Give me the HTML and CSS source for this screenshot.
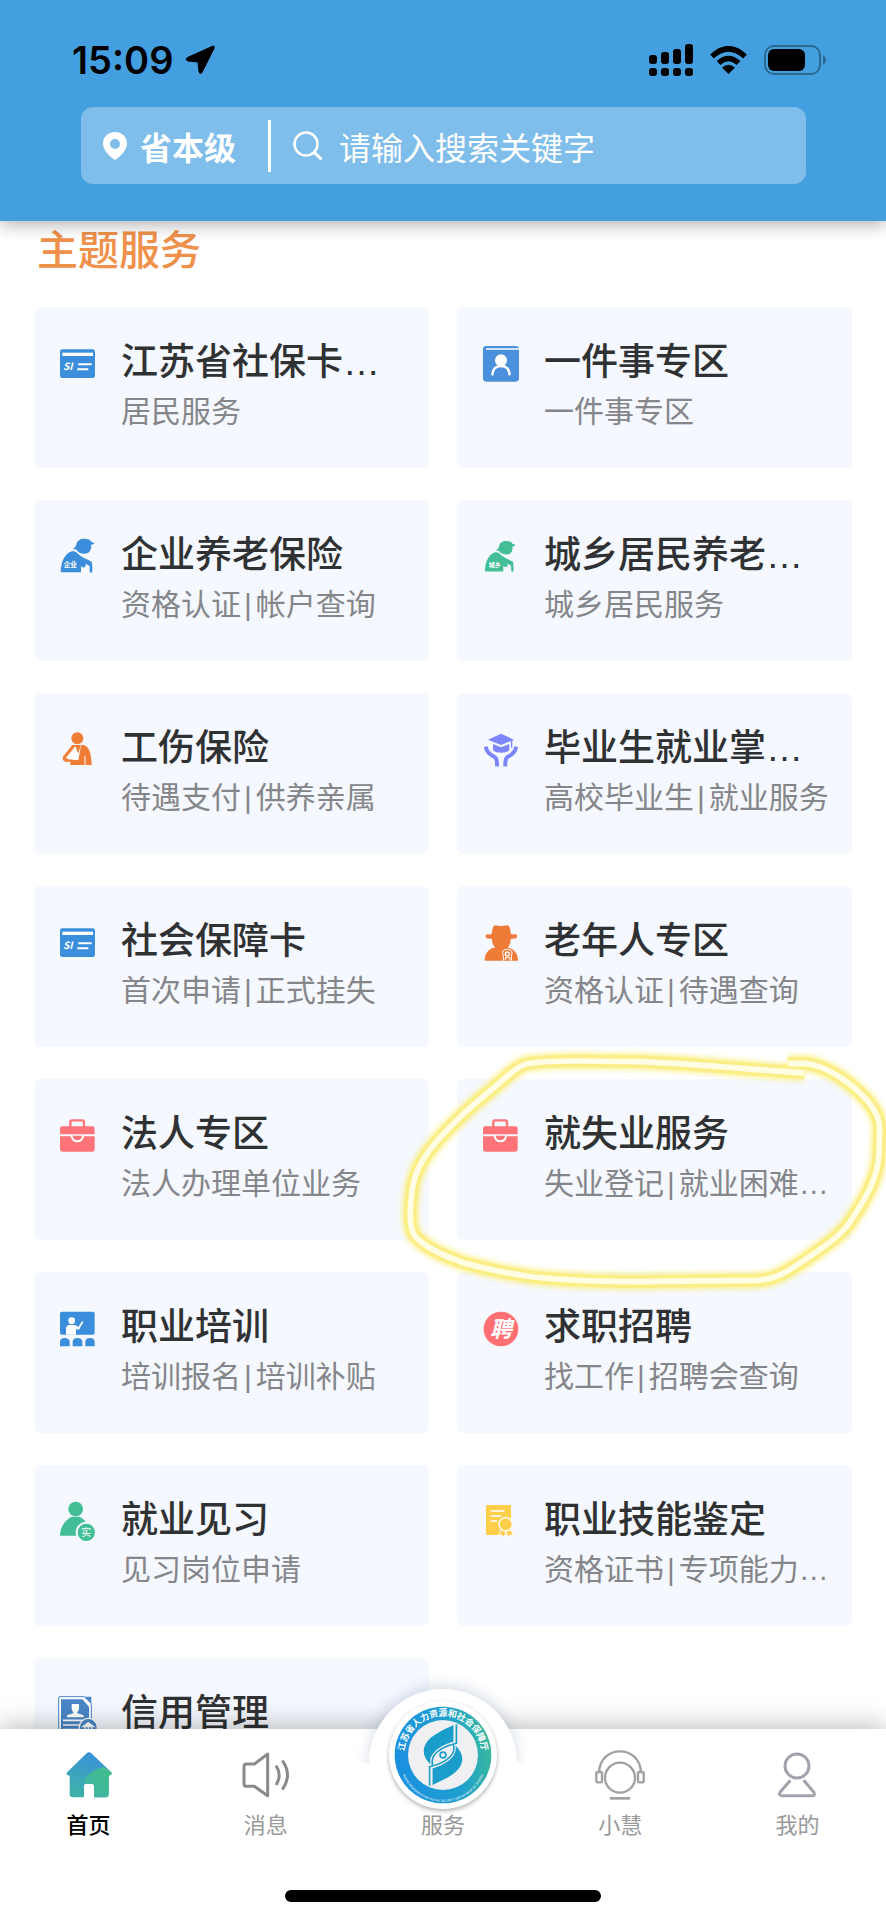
FILE: index.html
```html
<!DOCTYPE html>
<html lang="zh-CN">
<head>
    <meta charset="UTF-8">
    <meta name="viewport" content="width=device-width, initial-scale=1.0">
    <title>主题服务</title>
    <link rel="stylesheet" href="styles.css">
</head>
<body>

    <!-- Shared icons -->
    <svg class="sprite" aria-hidden="true">
        <symbol id="icon-case" viewBox="0 0 108 108">
            <rect x="34" y="10" width="41" height="28" rx="5" fill="none" stroke="#ff7478" stroke-width="7"/>
            <path d="M10 28H100Q107 28 107 35V52H3V35Q3 28 10 28ZM3 58H107V97Q107 104 100 104H10Q3 104 3 97Z" fill="#ff7478"/>
            <path d="M38 56a17 17 0 0 0 34 0" fill="#ff7478" stroke="#fff" stroke-width="6"/>
        </symbol>
        <symbol id="icon-elder" viewBox="0 0 108 108">
            <path d="M52 20C54 6 68 1 80 3C88 2 95 6 96 11L105 14L104 19L96 20C99 34 91 47 77 47C65 47 56 42 52 35C49 33 45 35 41 34C45 31 50 27 52 20Z"/>
            <path d="M5 103C6 75 14 50 35 41C43 38 51 40 57 47C68 59 84 62 98 71C100 78 100 91 100 100Q100 104 96 104Q92 104 92 99V84L80 77V84C76 90 72 90 66 84V103Z"/>
        </symbol>
    </svg>

    <div class="app">
        <header class="header">
            <div class="status-bar">
                <div class="status-left">
                    <span class="time">15:09</span>
                    <svg class="location-arrow" viewBox="0 0 30 30">
                        <path d="M27 1.500Q30 0 29 3.500L17 27.500Q14.500 30 14 26.500L13 17L3 16Q-0.500 14.500 2.500 12.500Z" stroke="#000" stroke-linejoin="round"/>
                    </svg>
                </div>
                <div class="status-right">
                    <svg class="signal" viewBox="0 0 44 32">
                        <rect x="0" y="11" width="8" height="9" rx="3"/>
                        <rect x="12" y="8" width="8" height="12" rx="3"/>
                        <rect x="24" y="5" width="8" height="15" rx="3"/>
                        <rect x="36" y="0" width="8" height="20" rx="3"/>
                        <rect x="0" y="24" width="8" height="8" rx="3"/>
                        <rect x="12" y="24" width="8" height="8" rx="3"/>
                        <rect x="24" y="24" width="8" height="8" rx="3"/>
                        <rect x="36" y="24" width="8" height="8" rx="3"/>
                    </svg>
                    <svg class="wifi" viewBox="0 0 38 28">
                        <path d="M2.500 10.500Q19 -5 35.500 10.500M9 17Q19 8 29 17" fill="none" stroke="#000" stroke-width="5.500"/>
                        <path d="M19 28L12.500 21.500Q19 16 25.500 21.500Z"/>
                    </svg>
                    <svg class="battery" viewBox="0 0 62 30">
                        <rect x="1" y="1" width="55" height="28" rx="9" fill="none" stroke="#2a688f" stroke-width="2"/>
                        <rect x="4" y="4" width="37" height="22" rx="6"/>
                        <path d="M59 10Q62 12 62 15Q62 18 59 20Z" fill="#2a688f"/>
                    </svg>
                </div>
            </div>
            <div class="search-bar">
                <button class="region" type="button">
                    <svg class="pin" viewBox="0 0 24 28">
                        <path fill-rule="evenodd" d="M12 0C19 0 24 5 24 11.500C24 18 18 24 12 28C6 24 0 18 0 11.500C0 5 5 0 12 0ZM12 7A5 5 0 1 0 12 17A5 5 0 1 0 12 7Z" fill="#fff"/>
                    </svg>
                    省本级
                </button>
                <label class="search-label" for="search" aria-label="搜索">
                    <svg class="search-icon" viewBox="0 0 30 30">
                        <circle cx="13" cy="13" r="11.500" fill="none" stroke="#fff" stroke-width="2.500"/>
                        <path d="M21 21L28.500 28.500" stroke="#fff" stroke-width="3"/>
                    </svg>
                </label>
                <input class="search-input" id="search" type="text" placeholder="请输入搜索关键字">
            </div>
        </header>

        <main class="content">
            <h1 class="section-title">主题服务</h1>
            <div class="service-grid">
                <a class="service-card" href="#">
                    <svg class="icon" viewBox="0 0 108 108">
                        <rect x="3" y="13" width="105" height="86" rx="7" fill="#3b8edb"/>
                        <rect x="10" y="23" width="92" height="10" fill="#fff"/>
                        <text x="12" y="76" font-size="30" font-weight="bold" font-style="italic" fill="#fff">SI</text>
                        <path d="M58 58H98M55 73H88" stroke="#fff" stroke-width="6"/>
                    </svg>
                    <div class="service-text">
                        <h2>江苏省社保卡…</h2>
                        <p>居民服务</p>
                    </div>
                </a>
                <a class="service-card" href="#">
                    <svg class="icon" viewBox="0 0 108 108">
                        <rect x="3" y="3" width="108" height="107" rx="10" fill="#4a90dc"/>
                        <path d="M12 12H111" stroke="#fff" stroke-width="5"/>
                        <circle cx="57" cy="46" r="18" fill="#fff"/>
                        <path d="M31 91C32 71 43 63 57 63C71 63 82 71 83 91" fill="none" stroke="#fff" stroke-width="7"/>
                    </svg>
                    <div class="service-text">
                        <h2>一件事专区</h2>
                        <p>一件事专区</p>
                    </div>
                </a>
                <a class="service-card" href="#">
                    <svg class="icon" viewBox="0 0 108 108">
                        <use href="#icon-elder" fill="#3b8edb"/>
                        <text x="14" y="87" font-size="20" font-weight="bold" fill="#fff">企业</text>
                    </svg>
                    <div class="service-text">
                        <h2>企业养老保险</h2>
                        <p>资格认证<span class="sep">|</span>帐户查询</p>
                    </div>
                </a>
                <a class="service-card" href="#">
                    <svg class="icon" viewBox="0 0 108 108">
                        <use href="#icon-elder" x="4" y="7" width="98" height="98" fill="#43bf97"/>
                        <text x="20" y="87" font-size="18" font-weight="bold" fill="#fff">城乡</text>
                    </svg>
                    <div class="service-text">
                        <h2>城乡居民养老…</h2>
                        <p>城乡居民服务</p>
                    </div>
                </a>
                <a class="service-card" href="#">
                    <svg class="icon" viewBox="0 0 108 108">
                        <circle cx="55" cy="22" r="18" fill="#f07c36"/>
                        <path d="M40 42H72C90 45 97 65 98 102H34V92H18Q7 86 13 76Z" fill="#f07c36"/>
                        <path d="M42 49L18 79L28 85L58 88L66 43Z" fill="#fff"/>
                        <path d="M48 43L58 68L65 42Z" fill="#f07c36"/>
                        <path d="M78 74V102" stroke="#fff" stroke-width="3"/>
                        <path d="M43 48L16 80" stroke="#f07c36" stroke-width="7"/>
                    </svg>
                    <div class="service-text">
                        <h2>工伤保险</h2>
                        <p>待遇支付<span class="sep">|</span>供养亲属</p>
                    </div>
                </a>
                <a class="service-card" href="#">
                    <svg class="icon" viewBox="0 0 108 108">
                        <path d="M57 8L96 26L57 42L18 26ZM33 39L57 49L82 39V58C72 68 43 68 33 58Z" fill="#7c86fa"/>
                        <path d="M89 28V50" stroke="#7c86fa" stroke-width="4"/>
                        <path d="M11 47C15 66 27 73 36 77Q46 81 45 106M103 47C99 66 87 73 78 77Q69 81 70 106" fill="none" stroke="#7c86fa" stroke-width="12"/>
                    </svg>
                    <div class="service-text">
                        <h2>毕业生就业掌…</h2>
                        <p>高校毕业生<span class="sep">|</span>就业服务</p>
                    </div>
                </a>
                <a class="service-card" href="#">
                    <svg class="icon" viewBox="0 0 108 108">
                        <rect x="3" y="13" width="105" height="86" rx="7" fill="#3b8edb"/>
                        <rect x="10" y="23" width="92" height="10" fill="#fff"/>
                        <text x="12" y="76" font-size="30" font-weight="bold" font-style="italic" fill="#fff">SI</text>
                        <path d="M58 58H98M55 73H88" stroke="#fff" stroke-width="6"/>
                    </svg>
                    <div class="service-text">
                        <h2>社会保障卡</h2>
                        <p>首次申请<span class="sep">|</span>正式挂失</p>
                    </div>
                </a>
                <a class="service-card" href="#">
                    <svg class="icon" viewBox="0 0 108 108">
                        <path d="M40 4Q57 8 75 4Q85 4 86 28Q88 33 101 30Q108 34 103 43L86 45C86 58 81 66 77 70C96 74 108 88 108 110H8C8 88 20 74 40 70C34 66 30 58 30 45L13 43Q8 34 14 31Q28 33 30 28Q31 4 40 4Z" fill="#ee7b38"/>
                        <path d="M64 110V96Q56 76 76 76Q96 76 88 96V110M70 108V101H84V108" fill="none" stroke="#fff" stroke-width="3"/>
                        <circle cx="76" cy="90" r="6" fill="none" stroke="#fff" stroke-width="4"/>
                    </svg>
                    <div class="service-text">
                        <h2>老年人专区</h2>
                        <p>资格认证<span class="sep">|</span>待遇查询</p>
                    </div>
                </a>
                <a class="service-card" href="#">
                    <svg class="icon"><use href="#icon-case"/></svg>
                    <div class="service-text">
                        <h2>法人专区</h2>
                        <p>法人办理单位业务</p>
                    </div>
                </a>
                <a class="service-card marked" href="#">
                    <svg class="icon"><use href="#icon-case"/></svg>
                    <div class="service-text">
                        <h2>就失业服务</h2>
                        <p>失业登记<span class="sep">|</span>就业困难…</p>
                    </div>
                    <!-- Hand-drawn highlight -->
                    <svg class="highlight" viewBox="0 0 1488 780" aria-hidden="true">
                        <defs>
                            <filter id="glow" x="-10%" y="-10%" width="120%" height="120%">
                                <feGaussianBlur stdDeviation="8"/>
                            </filter>
                            <path id="loop" d="M1195 68L1245 67C1290 71 1345 100 1390 138C1440 180 1468 220 1469 260L1467 340C1463 410 1430 470 1375 550C1345 590 1290 625 1240 660C1180 700 1150 716 1100 718L750 722C640 722 540 720 430 708C360 698 290 685 220 665C160 645 100 615 75 585C55 560 60 500 66 450C75 380 110 335 150 290C200 235 250 190 300 150C345 112 375 80 405 70C440 60 500 60 560 60L760 62C900 68 1080 85 1243 96"/>
                        </defs>
                        <g fill="none" stroke-linejoin="round">
                            <use href="#loop" stroke="#fbef7c" stroke-width="50" opacity="0.8" filter="url(#glow)"/>
                            <use href="#loop" stroke="#fcee86" stroke-width="38"/>
                            <use href="#loop" stroke="#fffde4" stroke-width="17"/>
                        </g>
                    </svg>
                </a>
                <a class="service-card" href="#">
                    <svg class="icon" viewBox="0 0 108 108">
                        <rect x="3" y="5" width="104" height="69" rx="6" fill="#3b8edb"/>
                        <circle cx="38" cy="32" r="10" fill="#fff"/>
                        <path d="M21 74V55Q22 44 34 44L50 46L58 51L69 34L73 36L60 59L51 57V74Z" fill="#fff"/>
                        <path d="M3 109V94Q5 84 17 84Q29 84 32 94V109ZM41 109V94Q43 84 55 84Q67 84 70 94V109ZM79 109V94Q81 84 93 84Q105 84 107 94V109Z" fill="#3b8edb"/>
                    </svg>
                    <div class="service-text">
                        <h2>职业培训</h2>
                        <p>培训报名<span class="sep">|</span>培训补贴</p>
                    </div>
                </a>
                <a class="service-card" href="#">
                    <svg class="icon" viewBox="0 0 108 108">
                        <circle cx="57" cy="57" r="52" fill="#ff7074"/>
                        <text x="57" y="82" font-size="66" font-weight="bold" font-style="italic" text-anchor="middle" fill="#fff">聘</text>
                    </svg>
                    <div class="service-text">
                        <h2>求职招聘</h2>
                        <p>找工作<span class="sep">|</span>招聘会查询</p>
                    </div>
                </a>
                <a class="service-card" href="#">
                    <svg class="icon" viewBox="0 0 108 108">
                        <circle cx="50" cy="18" r="22" fill="#43bf97"/>
                        <path d="M3 98C4 66 23 48 38 41H62C74 47 82 56 84 66L60 98Z" fill="#43bf97"/>
                        <circle cx="82" cy="88" r="29" fill="#43bf97" stroke="#f5f8fe" stroke-width="6"/>
                        <text x="82" y="99" font-size="30" text-anchor="middle" fill="#fff">实</text>
                    </svg>
                    <div class="service-text">
                        <h2>就业见习</h2>
                        <p>见习岗位申请</p>
                    </div>
                </a>
                <a class="service-card" href="#">
                    <svg class="icon" viewBox="0 0 108 108">
                        <rect x="12" y="6" width="75" height="90" rx="2" fill="#ffce4a"/>
                        <path d="M26 24H67M26 39H58M26 54H46" stroke="#fff" stroke-width="5"/>
                        <path d="M58 78L49 98L60 96L66 103L72 86L79 103L84 96L96 98L84 76Z" fill="#ffce4a" stroke="#fff" stroke-width="3"/>
                        <circle cx="71" cy="64" r="20" fill="#ffce4a" stroke="#fff" stroke-width="4"/>
                    </svg>
                    <div class="service-text">
                        <h2>职业技能鉴定</h2>
                        <p>资格证书<span class="sep">|</span>专项能力…</p>
                    </div>
                </a>
                <a class="service-card" href="#">
                    <svg class="icon" viewBox="0 0 108 108">
                        <path d="M3 2H76L97 23V108H3Q-1 108 -1 104V6Q-1 2 3 2Z" fill="#fff" stroke="#4a86c8" stroke-width="3"/>
                        <path d="M6 10H70L90 32V108H6Z" fill="#4a86c8"/>
                        <path d="M76 2H97V23Z" fill="#4a86c8"/>
                        <path d="M38 24H60V38Q60 44 55 48V52L74 58V64H24V58L43 52V48Q38 44 38 38Z" fill="#fff"/>
                        <path d="M12 73H72M12 87H60M12 101H60" stroke="#fff" stroke-width="5"/>
                        <circle cx="88" cy="94" r="27" fill="#4a86c8" stroke="#fff" stroke-width="4"/>
                        <path d="M88 80L104 92H72ZM78 94V108M88 94V108M98 94V108" fill="#fff" stroke="#fff" stroke-width="4"/>
                    </svg>
                    <div class="service-text">
                        <h2>信用管理</h2>
                    </div>
                </a>
            </div>
        </main>

        <footer class="footer">
            <nav class="tab-bar">
                <a class="tab active" href="#">
                    <svg class="tab-icon" viewBox="0 0 150 150">
                        <defs>
                            <linearGradient id="home-fill" x1="0.700" y1="0" x2="0.300" y2="1">
                                <stop offset="0" stop-color="#3b8fdc"/>
                                <stop offset="1" stop-color="#3eb2a9"/>
                            </linearGradient>
                            <linearGradient id="home-side" x1="1" y1="0" x2="0" y2="1">
                                <stop offset="0" stop-color="#43c088"/>
                                <stop offset="1" stop-color="#3eb2a9"/>
                            </linearGradient>
                        </defs>
                        <path d="M68 10Q75 4 82 10L141 66Q146 73 138 76L134 77V132Q134 142 124 142H90V108Q90 101 83 101H67Q60 101 60 108V142H27Q17 142 17 132V77L12 76Q4 73 10 66Z" fill="url(#home-fill)"/>
                        <path d="M119 50L141 66Q146 73 138 76L134 77V132Q134 142 124 142H90V108Q90 101 83 101H67Q60 101 60 90Q75 62 119 50Z" fill="url(#home-side)"/>
                    </svg>
                    首页
                </a>
                <a class="tab" href="#">
                    <svg class="tab-icon" viewBox="0 0 150 150" fill="none" stroke="#8a8a8a" stroke-width="9">
                        <path d="M80 12V137L40 109H17Q9 109 9 101V50Q9 42 17 42H40Z" stroke-linejoin="round"/>
                        <path d="M105 47Q124 75 105 105M124 32Q155 75 124 119"/>
                    </svg>
                    消息
                </a>
                <a class="tab center" href="#">
                    <span class="emblem">
                        <svg class="emblem-logo" viewBox="0 0 300 300">
                            <defs>
                                <linearGradient id="ring" x1="0" y1="0.600" x2="1" y2="0.400">
                                    <stop offset="0" stop-color="#1a90e0"/>
                                    <stop offset="0.600" stop-color="#1f9fd0"/>
                                    <stop offset="1" stop-color="#38b99c"/>
                                </linearGradient>
                                <path id="arc-top" d="M31 150A119 119 0 0 1 269 150"/>
                                <path id="arc-bottom" d="M17 160A133 133 0 0 0 283 160"/>
                            </defs>
                            <circle cx="150" cy="150" r="148" fill="url(#ring)"/>
                            <circle cx="150" cy="150" r="107" fill="#f0f0f2"/>
                            <text font-size="27" font-weight="bold" fill="#fff" text-anchor="middle"><textPath href="#arc-top" startOffset="50%">江苏省人力资源和社会保障厅</textPath></text>
                            <text font-size="9" fill="#fff" text-anchor="middle"><textPath href="#arc-bottom" startOffset="50%">HUMAN RESOURCES AND SOCIAL SECURITY DEPARTMENT OF JIANGSU</textPath></text>
                            <path d="M182 58V109C160 116 132 128 118 148Q108 162 112 179C92 160 84 138 98 114C114 88 150 74 182 58Z" fill="#1b9dcb"/>
                            <path d="M191 56V114C160 121 132 135 120 155Q115 167 118 181" fill="none" stroke="#1b9dcb" stroke-width="5"/>
                            <path d="M118 242V191C140 184 168 172 182 152Q192 138 188 121C208 140 216 162 202 186C186 212 150 226 118 242Z" fill="#1b9dcb"/>
                            <path d="M109 244V186C140 179 168 165 180 145Q185 133 182 119" fill="none" stroke="#1b9dcb" stroke-width="5"/>
                            <circle cx="150" cy="150" r="9" fill="none" stroke="#1b9dcb" stroke-width="5"/>
                        </svg>
                    </span>
                    服务
                </a>
                <a class="tab" href="#">
                    <svg class="tab-icon" viewBox="0 0 150 150" fill="none" stroke="#a0a0a0" stroke-width="7">
                        <circle cx="75" cy="83" r="45"/>
                        <path d="M12 66C14 27 42 4 75 4C108 4 136 27 138 66"/>
                        <rect x="4" y="66" width="17" height="31" rx="4"/>
                        <rect x="129" y="66" width="17" height="31" rx="4"/>
                        <path d="M45 145H105" stroke-width="8"/>
                    </svg>
                    小慧
                </a>
                <a class="tab" href="#">
                    <svg class="tab-icon" viewBox="0 0 150 150" fill="none" stroke="#a3a3ad" stroke-width="9">
                        <circle cx="75" cy="48" r="36"/>
                        <path d="M55 91L25 126Q18 137 30 137H121Q132 137 125 126L95 91"/>
                    </svg>
                    我的
                </a>
            </nav>
            <div class="home-indicator"></div>
        </footer>
    </div>

</body>
</html>
```
FILE: styles.css
```css
* {
    padding: 0;
    margin: 0;
    box-sizing: border-box;
}

body {
    background: #fff;
    font-family: 'Liberation Sans', 'Noto Sans CJK SC', sans-serif;
    color: #303133;
}

a {
    color: inherit;
    text-decoration: none;
}

svg {
    display: block;
    flex-shrink: 0;
}

.sprite {
    position: absolute;
    width: 0;
    height: 0;
}

.app {
    height: 100vh;
    display: flex;
    flex-direction: column;
}

/* Header */
.header {
    position: relative;
    z-index: 2;
    padding: 36px 60px 37px 72px;
    background: #449fe1;
    box-shadow: 0 4px 16px rgba(0, 0, 0, 0.3);
}

.status-bar {
    display: flex;
    justify-content: space-between;
    align-items: center;
    height: 48px;
}

.status-left, .status-right {
    display: flex;
    align-items: center;
}

.status-left {
    gap: 12px;
}

.status-right {
    gap: 16px;
}

.time {
    font-family: 'Inter', sans-serif;
    font-size: 38px;
    font-weight: 600;
    color: #000;
}

.location-arrow {
    width: 30px;
    height: 30px;
}

.signal {
    width: 44px;
    height: 32px;
}

.wifi {
    width: 39px;
    height: 28px;
}

.battery {
    width: 62px;
    height: 30px;
}

.search-bar {
    display: flex;
    align-items: center;
    height: 77px;
    margin: 23px 20px 0 9px;
    padding: 0 20px 0 22px;
    border-radius: 12px;
    background: #7fbdea;
}

.region {
    display: flex;
    align-items: center;
    gap: 13px;
    height: 52px;
    padding-right: 32px;
    border: none;
    border-right: 3px solid #fff;
    background: none;
    color: #fff;
    font-family: 'Noto Sans CJK SC', sans-serif;
    font-size: 32px;
    font-weight: bold;
    line-height: 48px;
    white-space: nowrap;
    cursor: pointer;
}

.pin {
    width: 24px;
    height: 28px;
}

.search-label {
    padding: 0 16px 0 22px;
}

.search-icon {
    width: 30px;
    height: 30px;
}

.search-input {
    flex: 1;
    min-width: 0;
    height: 52px;
    border: none;
    outline: none;
    background: none;
    color: #fff;
    font-family: 'Noto Sans CJK SC', sans-serif;
    font-size: 32px;
}

.search-input::placeholder {
    color: #fff;
    opacity: 1;
}

/* Services */
.content {
    flex: 1;
    min-height: 0;
    padding: 0 34px;
    overflow-y: auto;
    scrollbar-width: none;
}

.section-title {
    margin-bottom: 26px;
    padding-left: 3px;
    color: #f0914b;
    font-size: 41px;
    font-weight: 500;
    line-height: 60px;
}

.service-grid {
    display: grid;
    grid-template-columns: repeat(2, minmax(0, 1fr));
    gap: 32px 28px;
}

.service-card {
    display: flex;
    gap: 26px;
    padding: 30px 20px 33px 25px;
    border-radius: 6px;
    background: #f5f8fe;
}

.service-card.marked {
    position: relative;
    z-index: 1;
}

.icon {
    width: 36px;
    height: 36px;
    margin-top: 8px;
    overflow: visible;
    font-family: 'Noto Sans CJK SC', sans-serif;
}

.service-text {
    min-width: 0;
    white-space: nowrap;
}

.service-text h2 {
    font-size: 37px;
    font-weight: 500;
    line-height: 52px;
}

.service-text p {
    color: #85868a;
    font-size: 30px;
    font-weight: 400;
    line-height: 46px;
}

.sep {
    padding: 0 4px 0 3px;
}

.highlight {
    position: absolute;
    top: -38px;
    left: -67px;
    width: 496px;
    height: 260px;
    pointer-events: none;
}

/* Tab bar */
.footer {
    position: relative;
    z-index: 2;
    padding-bottom: 18px;
    background: #fff;
    box-shadow: 0 -4px 24px rgba(0, 0, 0, 0.25);
}

.tab-bar {
    display: flex;
}

.tab {
    flex: 1;
    display: flex;
    flex-direction: column;
    align-items: center;
    gap: 10px;
    padding-top: 21px;
    color: #999;
    font-size: 22px;
    line-height: 32px;
}

.tab.active {
    color: #000;
    font-weight: 500;
}

.tab-icon {
    width: 50px;
    height: 50px;
}

/* Raised button in the middle of the bar */
.tab.center {
    position: relative;
    padding-top: 81px;
    gap: 0;
}

.emblem {
    position: absolute;
    top: -40px;
    left: 50%;
    width: 148px;
    padding: 12px 20px;
    transform: translateX(-50%);
}

.emblem::before {
    content: '';
    position: absolute;
    top: 0;
    left: 0;
    width: 148px;
    height: 148px;
    border-radius: 50%;
    background: #fff;
    box-shadow: 0 -4px 14px rgba(60, 90, 140, 0.2);
    clip-path: inset(-30px -30px 74px -30px);
}

.emblem-logo {
    position: relative;
    width: 108px;
    height: 108px;
    padding: 5px;
    border-radius: 50%;
    background: #fff;
    box-shadow: 0 2px 4px rgba(0, 0, 0, 0.3);
}

.home-indicator {
    width: 36%;
    max-width: 316px;
    height: 12px;
    margin: 48px auto 0;
    border-radius: 6px;
    background: #000;
}
```
